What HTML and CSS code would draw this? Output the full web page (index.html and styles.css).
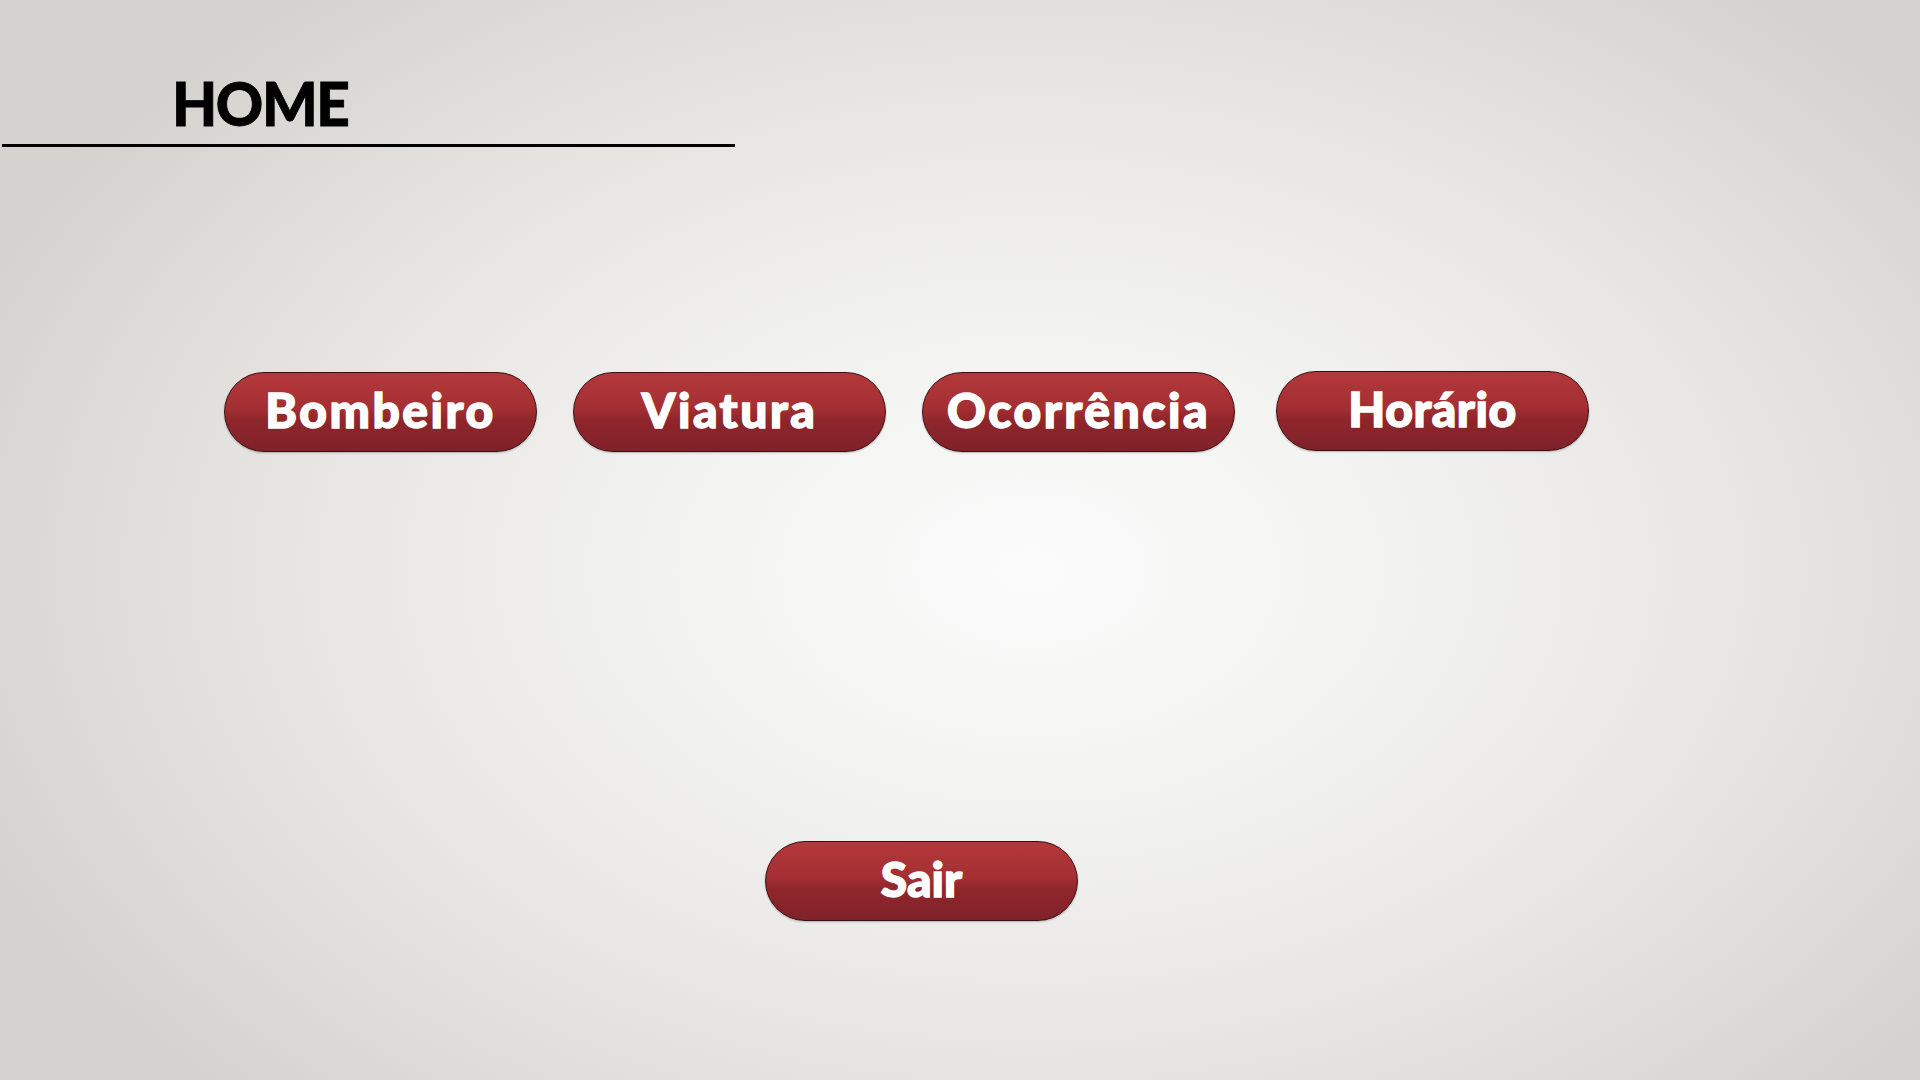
FILE: index.html
```html
<!DOCTYPE html>
<html lang="pt">
<head>
<meta charset="utf-8">
<title>Home</title>
<link rel="stylesheet" href="styles.css">
</head>
<body>
<div class="page">
  <header class="header">
    <h1 class="title">HOME</h1>
  </header>
  <nav class="menu">
    <button class="btn">Bombeiro</button>
    <button class="btn">Viatura</button>
    <button class="btn">Ocorrência</button>
    <button class="btn btn-last">Horário</button>
  </nav>
  <div class="exit">
    <button class="btn btn-exit">Sair</button>
  </div>
</div>
</body>
</html>
```
FILE: styles.css
```css
html, body {
  margin: 0;
  padding: 0;
}
body {
  width: 1920px;
  height: 1080px;
  overflow: hidden;
  background: radial-gradient(ellipse 1150px 760px at 1030px 570px, #fbfbfb 0%, #f3f3f2 30%, #e6e5e2 65%, #d3d2ce 100%);
  font-family: "Lato", "Liberation Sans", sans-serif;
}
.page {
  display: flex;
  flex-direction: column;
}
.header {
  width: 733px;
  margin-left: 2px;
  padding: 72px 0 10px 170px;
  box-sizing: border-box;
  border-bottom: 3px solid #000;
}
.title {
  margin: 0;
  font-size: 61px;
  line-height: 62px;
  font-weight: 900;
  color: #000;
  letter-spacing: -1.5px;
  -webkit-text-stroke: 0.8px #000;
  transform: scaleX(0.96);
  transform-origin: left center;
}
.menu {
  display: flex;
  gap: 36px;
  margin: 225px 0 0 224px;
  align-items: flex-start;
}
.btn {
  width: 313px;
  height: 80px;
  box-sizing: border-box;
  border: 1px solid #3a0f10;
  border-radius: 40px;
  background: linear-gradient(to bottom, #b3383b 0%, #a42f33 45%, #8f262b 60%, #80212a 100%);
  box-shadow: 0 1px 2px rgba(0,0,0,0.25);
  color: #fff;
  font-family: "Lato", "Liberation Sans", sans-serif;
  font-weight: 900;
  font-size: 48px;
  line-height: 1;
  padding: 0 0 4px 0;
  display: flex;
  align-items: center;
  justify-content: center;
  letter-spacing: 2.5px;
  -webkit-text-stroke: 1.4px #fff;
  cursor: pointer;
}
.btn-last {
  margin: -1px 0 0 5px;
  letter-spacing: 0.5px;
}
.btn-exit {
  letter-spacing: 0;
}
.exit {
  margin: 389px 0 0 765px;
  display: flex;
}
```
